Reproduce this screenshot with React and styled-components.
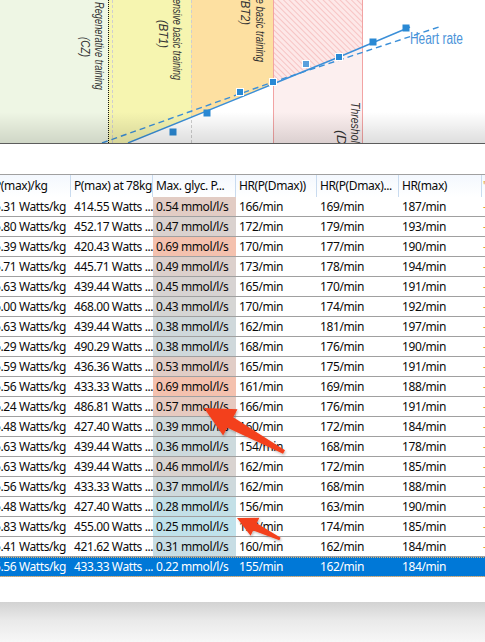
import React from 'react';
import styled, { createGlobalStyle, css } from 'styled-components';

const GlobalStyle = createGlobalStyle`
  html, body {
    margin: 0;
    padding: 0;
    background: #ffffff;
    overflow: hidden;
  }
  body {
    font-family: "Noto Sans", "Open Sans", sans-serif;
  }
`;

const COLUMNS = '80px 82px 83px 81px 82px 83px 60px';

const Page = styled.div`
  position: relative;
  width: 485px;
  height: 642px;
  display: flex;
  flex-direction: column;
  background: #ffffff;
  overflow: hidden;
`;

const ChartPanel = styled.div`
  flex: none;
  height: 143px;
  border-bottom: 1px solid #5c5c5c;
  svg {
    display: block;
  }
`;

const ListPanel = styled.div`
  flex: none;
  margin-top: 30px;
  border-top: 1px solid #a0a0a0;
  overflow: hidden;
`;

const ListBody = styled.div`
  width: max-content;
  margin-left: -9px;
`;

const HeaderRow = styled.div`
  display: grid;
  grid-template-columns: ${COLUMNS};
  height: 22px;
  background: linear-gradient(#f4f8fe, #ffffff);
`;

const HeaderCell = styled.div`
  padding: 0 0 0 3px;
  border-right: 1px solid #c9dbef;
  font-size: 12px;
  letter-spacing: -0.4px;
  line-height: 22px;
  color: #0a0a0a;
  white-space: nowrap;
  overflow: hidden;
  ${(p) =>
    p.$accent &&
    css`
      padding-left: 1px;
      color: #e4a425;
    `}
`;

const Row = styled.div`
  display: grid;
  grid-template-columns: ${COLUMNS};
  height: 19px;
  border-bottom: 1px solid #a0a0a0;
  background: #ffffff;
  color: #0a0a0a;
  ${(p) =>
    p.$selected &&
    css`
      background: #0078d7;
      color: #ffffff;
      outline: 1px dotted #d8b57a;
      outline-offset: -1px;
    `}
`;

const Cell = styled.div`
  padding: 0 0 0 3px;
  font-size: 12px;
  letter-spacing: -0.4px;
  line-height: 19px;
  white-space: nowrap;
  overflow: hidden;
  background: ${(p) => p.$tint || 'transparent'};
  ${(p) =>
    p.$accent &&
    css`
      padding-left: 1px;
      color: #e8a12a;
    `}
`;

const Shade = styled.div`
  flex: 1;
  margin-top: 25px;
  background: linear-gradient(#d2d2d2, #e9e9e9 45%, #f7f7f7);
`;

const ArrowLayer = styled.svg`
  position: absolute;
  left: 0;
  top: 0;
  width: 485px;
  height: 642px;
  pointer-events: none;
  overflow: visible;
`;

const rows = [
  ['5.31', '414.55', '0.54', '166', '169', '187'],
  ['5.80', '452.17', '0.47', '172', '179', '193'],
  ['5.39', '420.43', '0.69', '170', '177', '190'],
  ['5.71', '445.71', '0.49', '173', '178', '194'],
  ['5.63', '439.44', '0.45', '165', '170', '191'],
  ['6.00', '468.00', '0.43', '170', '174', '192'],
  ['5.63', '439.44', '0.38', '162', '181', '197'],
  ['6.29', '490.29', '0.38', '168', '176', '190'],
  ['5.59', '436.36', '0.53', '165', '175', '191'],
  ['5.56', '433.33', '0.69', '161', '169', '188'],
  ['6.24', '486.81', '0.57', '166', '176', '191'],
  ['5.48', '427.40', '0.39', '160', '172', '184'],
  ['5.63', '439.44', '0.36', '154', '168', '178'],
  ['5.63', '439.44', '0.46', '162', '172', '185'],
  ['5.56', '433.33', '0.37', '162', '168', '188'],
  ['5.48', '427.40', '0.28', '156', '163', '190'],
  ['5.83', '455.00', '0.25', '158', '174', '185'],
  ['5.41', '421.62', '0.31', '160', '162', '184'],
  ['5.56', '433.33', '0.22', '155', '162', '184'],
];

// three-stop colour scale for the glycolytic column: cool -> neutral -> warm
const LOW = [188, 228, 239];
const MID = [216, 211, 209];
const HIGH = [244, 193, 174];
const mix = (a, b, t) => a.map((v, i) => Math.round(v + (b[i] - v) * t));
function glycTint(value) {
  const t = Math.min(1, Math.max(0, (value - 0.22) / (0.69 - 0.22)));
  const c = t < 0.5 ? mix(LOW, MID, t / 0.5) : mix(MID, HIGH, (t - 0.5) / 0.5);
  return `rgb(${c[0]}, ${c[1]}, ${c[2]})`;
}

// tapered callout arrow outline from tail to tip
function arrowPoints(tip, tail, headLen, headHalf, neckHalf, tailHalf) {
  const dx = tip[0] - tail[0];
  const dy = tip[1] - tail[1];
  const len = Math.hypot(dx, dy);
  const ux = dx / len;
  const uy = dy / len;
  const nx = -uy;
  const ny = ux;
  const bx = tip[0] - ux * headLen;
  const by = tip[1] - uy * headLen;
  const pts = [
    [tip[0], tip[1]],
    [bx + nx * headHalf, by + ny * headHalf],
    [bx + nx * neckHalf, by + ny * neckHalf],
    [tail[0] + nx * tailHalf, tail[1] + ny * tailHalf],
    [tail[0] - nx * tailHalf, tail[1] - ny * tailHalf],
    [bx - nx * neckHalf, by - ny * neckHalf],
    [bx - nx * headHalf, by - ny * headHalf],
  ];
  return pts.map((p) => p.map((v) => v.toFixed(1)).join(',')).join(' ');
}

const markers = [
  { x: 173, y: 132, ring: false, light: false },
  { x: 207, y: 113, ring: false, light: false },
  { x: 240, y: 92, ring: true, light: false },
  { x: 273, y: 82, ring: true, light: false },
  { x: 306, y: 64, ring: true, light: true },
  { x: 339, y: 57, ring: true, light: false },
  { x: 373, y: 42, ring: false, light: false },
  { x: 406, y: 28, ring: false, light: false },
];

const zoneLabels = [
  { x: 95, y: 46, len: 88, text: 'Regenerative training' },
  { x: 81, y: 47, len: 20, text: '(CZ)' },
  { x: 173, y: 33, len: 94, text: 'Extensive basic training' },
  { x: 159, y: 34, len: 28, text: '(BT1)' },
  { x: 256, y: 14, len: 96, text: 'Intensive basic training' },
  { x: 241, y: 11, len: 28, text: '(BT2)' },
  { x: 351, y: 144, len: 84, text: 'Threshold training' },
  { x: 337, y: 144, len: 28, text: '(DT)' },
];

function ZoneChart() {
  return (
    <svg width="485" height="143" viewBox="0 0 485 143">
      <defs>
        <pattern
          id="zoneHatch"
          width="4"
          height="4"
          patternUnits="userSpaceOnUse"
          patternTransform="rotate(-45)"
        >
          <rect width="4" height="4" fill="#fde8e8" />
          <line x1="0" y1="0" x2="0" y2="4" stroke="#f5b1b1" strokeWidth="1.3" />
        </pattern>
        <clipPath id="aboveCurve">
          <polygon points="0,0 485,0 485,-5 410,27 339,57 273,84 128,143 0,143" />
        </clipPath>
        <linearGradient id="floorShade" x1="0" y1="0" x2="0" y2="1">
          <stop offset="0" stopColor="#000" stopOpacity="0" />
          <stop offset="1" stopColor="#000" stopOpacity="0.13" />
        </linearGradient>
      </defs>

      <rect x="0" y="0" width="485" height="143" fill="#ffffff" />
      <rect x="0" y="0" width="108" height="143" fill="#eef6e4" />
      <rect x="273" y="0" width="89" height="143" fill="#fcefef" />
      <g clipPath="url(#aboveCurve)">
        <rect x="108" y="0" width="83" height="143" fill="#f6f5b0" />
        <rect x="191" y="0" width="82" height="143" fill="#fde0a1" />
        <rect x="273" y="0" width="89" height="143" fill="url(#zoneHatch)" />
      </g>

      <line x1="108.5" y1="0" x2="108.5" y2="143" stroke="#111" strokeWidth="1" strokeDasharray="1 1" />
      <line x1="112.5" y1="0" x2="112.5" y2="143" stroke="#cfcfcf" strokeWidth="1" strokeDasharray="3 2" />
      <line x1="191.5" y1="0" x2="191.5" y2="143" stroke="#cfcfcf" strokeWidth="1" strokeDasharray="3 2" />
      <line x1="273.5" y1="0" x2="273.5" y2="143" stroke="#f2a3a3" strokeWidth="1" />
      <line x1="362.5" y1="0" x2="362.5" y2="143" stroke="#f2a3a3" strokeWidth="1" />

      {zoneLabels.map((l) => (
        <text
          key={l.text}
          transform={`translate(${l.x} ${l.y}) rotate(90)`}
          textAnchor="middle"
          textLength={l.len}
          lengthAdjust="spacingAndGlyphs"
          fontFamily="'Liberation Sans', Arial, sans-serif"
          fontStyle="italic"
          fontSize="12"
          fill="#333333"
        >
          {l.text}
        </text>
      ))}

      <polyline
        points="102,143 273,82 442,26"
        fill="none"
        stroke="#3b8fd8"
        strokeWidth="1.4"
        strokeDasharray="6 4"
      />
      <polyline
        points="128,143 273,84 339,57 410,27"
        fill="none"
        stroke="#3b8fd8"
        strokeWidth="1.4"
      />
      {markers.map((m) => (
        <rect
          key={m.x}
          x={m.x - 3.5}
          y={m.y - 3.5}
          width="7"
          height="7"
          fill={m.light ? '#5aa0dc' : '#2a89d4'}
          stroke={m.ring ? '#ffffff' : 'none'}
          strokeWidth="1"
        />
      ))}
      <text
        x="410"
        y="44"
        fontFamily="'Liberation Sans', Arial, sans-serif"
        fontSize="16"
        fill="#4a93d9"
        textLength="53"
        lengthAdjust="spacingAndGlyphs"
      >
        Heart rate
      </text>

      <rect x="0" y="112" width="485" height="31" fill="url(#floorShade)" />
    </svg>
  );
}

function ResultsList() {
  return (
    <ListPanel>
      <ListBody>
        <HeaderRow>
          <HeaderCell>P(max)/kg</HeaderCell>
          <HeaderCell>P(max) at 78kg</HeaderCell>
          <HeaderCell>Max. glyc. P...</HeaderCell>
          <HeaderCell>HR(P(Dmax))</HeaderCell>
          <HeaderCell>HR(P(Dmax)...</HeaderCell>
          <HeaderCell>HR(max)</HeaderCell>
          <HeaderCell $accent>'</HeaderCell>
        </HeaderRow>
        {rows.map((r, i) => {
          const selected = i === rows.length - 1;
          return (
            <Row key={i} $selected={selected}>
              <Cell>{r[0]} Watts/kg</Cell>
              <Cell>{r[1]} Watts ...</Cell>
              <Cell $tint={selected ? undefined : glycTint(parseFloat(r[2]))}>
                {r[2]} mmol/l/s
              </Cell>
              <Cell>{r[3]}/min</Cell>
              <Cell>{r[4]}/min</Cell>
              <Cell>{r[5]}/min</Cell>
              <Cell $accent={!selected}>-</Cell>
            </Row>
          );
        })}
      </ListBody>
    </ListPanel>
  );
}

export default function App() {
  return (
    <>
      <GlobalStyle />
      <Page>
        <ChartPanel>
          <ZoneChart />
        </ChartPanel>
        <ResultsList />
        <Shade />
        <ArrowLayer viewBox="0 0 485 642">
          <defs>
            <filter id="arrowShadow" x="-20%" y="-20%" width="140%" height="140%">
              <feDropShadow dx="1" dy="1.5" stdDeviation="1.2" floodColor="#000" floodOpacity="0.25" />
            </filter>
          </defs>
          <polygon
            points={arrowPoints([204, 408], [284, 452], 30, 15, 6, 2)}
            fill="#f3401d"
            strokeLinejoin="round"
            filter="url(#arrowShadow)"
          />
          <polygon
            points={arrowPoints([237, 518], [280, 539], 20, 10, 4, 1.5)}
            fill="#f3401d"
            strokeLinejoin="round"
            filter="url(#arrowShadow)"
          />
        </ArrowLayer>
      </Page>
    </>
  );
}
